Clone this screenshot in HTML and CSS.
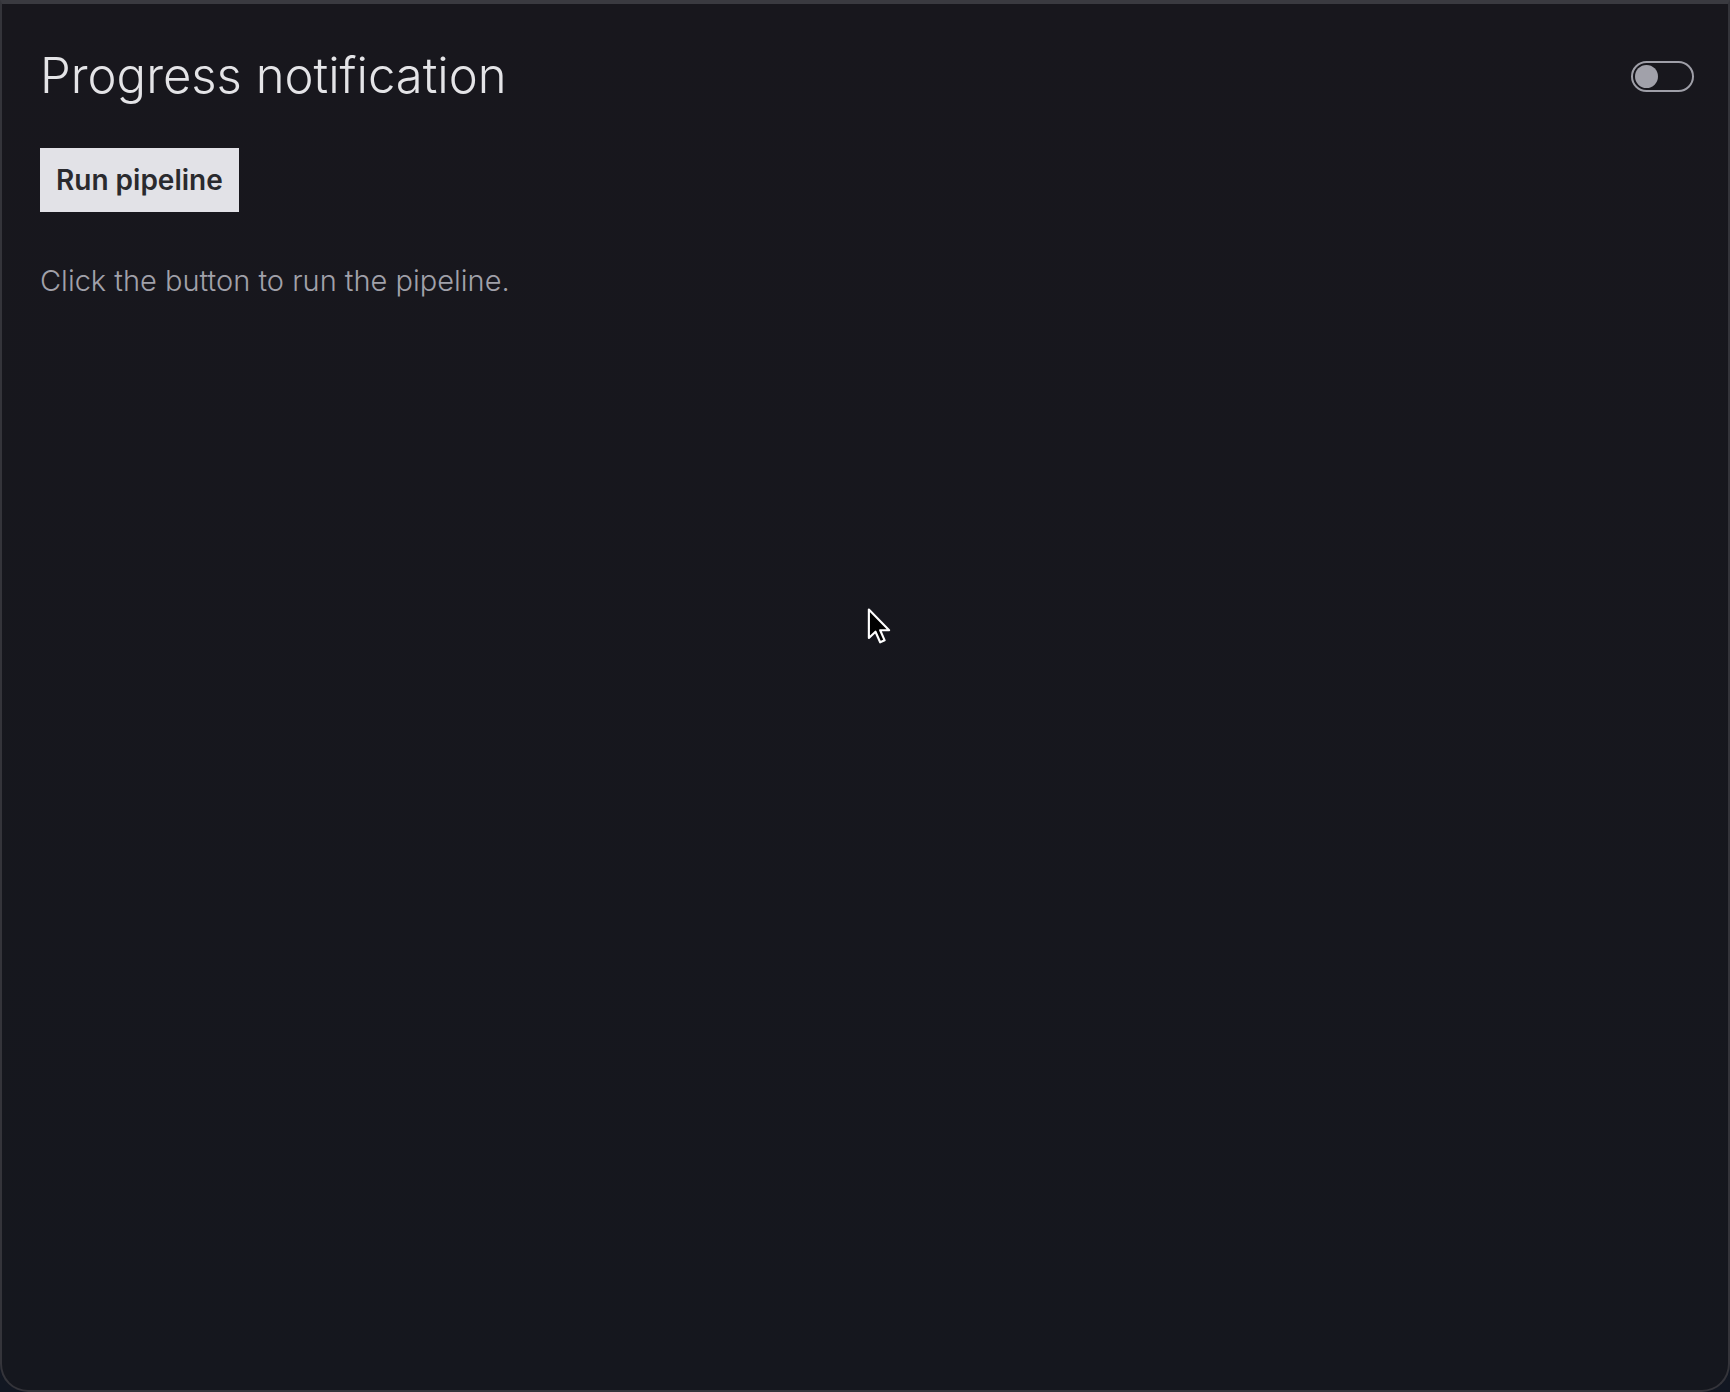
FILE: index.html
```html
<!DOCTYPE html>
<html lang="en">
<head>
<meta charset="UTF-8" />
<meta name="viewport" content="width=device-width, initial-scale=1" />
<title>Progress notification</title>
<link rel="stylesheet" href="styles.css">
</head>
<body>

<div class="panel">
  <div class="header">
    <h1 class="title">Progress notification</h1>
    <label class="toggle">
      <input type="checkbox" />
      <span class="track"><span class="knob"></span></span>
    </label>
  </div>

  <button class="run-btn">Run pipeline</button>

  <p class="status">Click the button to run the pipeline.</p>
</div>

<svg class="cursor" viewBox="0 0 12 19" width="24" height="37">
  <path d="M0.8 0.8 L0.8 15.4 L4.2 12.2 L6.6 17.6 L8.9 16.6 L6.6 11.4 L11.2 11.4 Z" fill="#000" stroke="#fff" stroke-width="1.1" stroke-linejoin="round" />
</svg>

</body>
</html>
```

FILE: styles.css
```css
/* Reset */
* {
  margin: 0; padding: 0; box-sizing: border-box;
}
html, body {
  height: 100%;
  background: #121722;
  font-family: Inter, 'Noto Sans', sans-serif;
  color: #e4e4e7;
  overflow: hidden;
}
.panel {
  height: 100vh;
  background: linear-gradient(#18171d, #15171e);
  border: 2px solid #34343a;
  border-top: 4px solid #3a3a40;
  border-radius: 0 0 28px 28px;
  padding: 43px 34px 0 38px;
}
.header {
  display: flex;
  justify-content: space-between;
  align-items: center;
}
.title {
  font-size: 49px;
  font-weight: 300;
  line-height: 1.2;
  color: #e4e4e7;
}
.toggle {
  display: block;
  cursor: pointer;
}
.toggle input {
  display: none;
}
.track {
  display: flex;
  align-items: center;
  width: 63px;
  height: 31px;
  border: 2px solid #9f9fa8;
  border-radius: 16px;
  padding: 0 2px;
}
.knob {
  width: 23px;
  height: 23px;
  border-radius: 50%;
  background: #a1a1aa;
  transition: transform 0.2s ease;
}
.toggle input:checked + .track .knob {
  transform: translateX(30px);
}
.run-btn {
  display: block;
  margin-top: 42px;
  background: #e2e2e7;
  color: #2a2a2e;
  border: none;
  font-family: inherit;
  font-size: 28px;
  font-weight: 600;
  line-height: 32px;
  padding: 16px 16px;
  cursor: pointer;
}
.run-btn:hover {
  background: #f4f4f5;
}
.status {
  margin-top: 47px;
  font-size: 29px;
  font-weight: 300;
  line-height: 1.5;
  color: #a1a1aa;
}
.cursor {
  position: absolute;
  left: 867px;
  top: 608px;
  pointer-events: none;
}
```
